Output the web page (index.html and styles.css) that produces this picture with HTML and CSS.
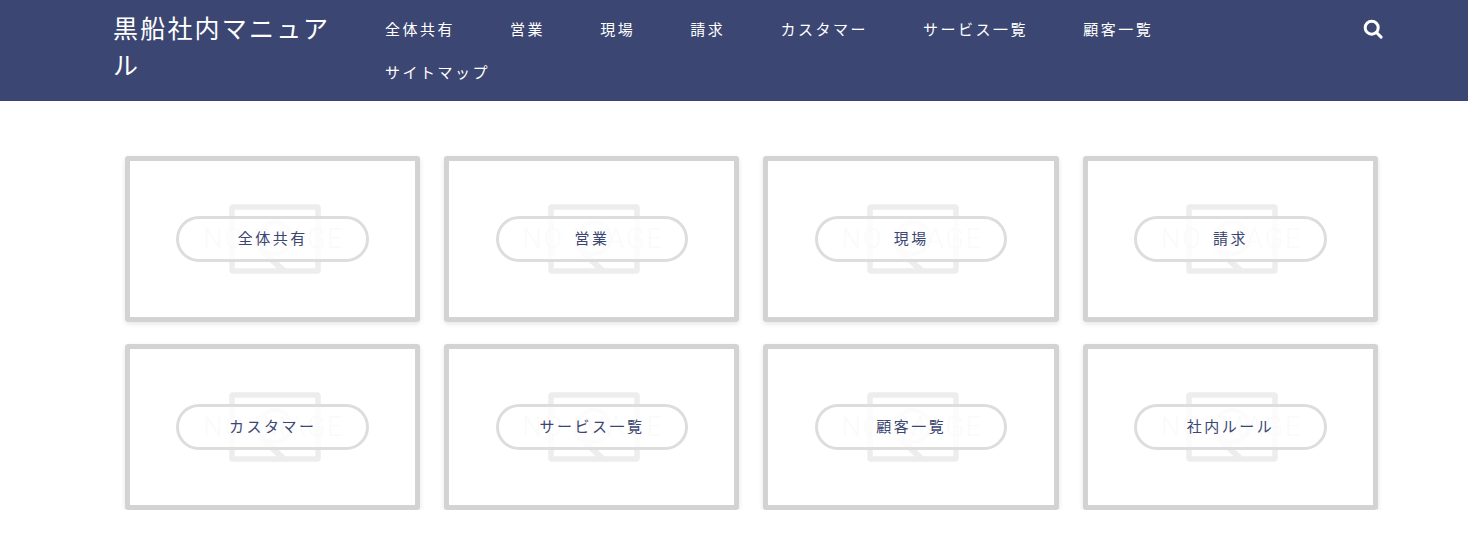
FILE: index.html
```html
<!DOCTYPE html>
<html lang="ja">
<head>
    <meta charset="UTF-8">
    <meta name="viewport" content="width=device-width, initial-scale=1.0">
    <title>黒船社内マニュアル</title>
    <link rel="stylesheet" href="styles.css">
</head>
<body>
    <svg class="sprite" width="0" height="0">
        <symbol id="noimage" viewBox="0 0 92 70">
            <rect x="3" y="3" width="86" height="64" rx="1" fill="none" stroke="currentColor" stroke-width="5.5"/>
            <path d="M30 44L55 67" fill="none" stroke="currentColor" stroke-width="6"/>
            <circle cx="46" cy="34" r="16" fill="none" stroke="currentColor" stroke-width="4"/>
        </symbol>
    </svg>

    <header class="site-header">
        <div class="header-inner">
            <a class="site-title" href="#">黒船社内マニュアル</a>
            <nav class="global-nav">
                <a href="#">全体共有</a>
                <a href="#">営業</a>
                <a href="#">現場</a>
                <a href="#">請求</a>
                <a href="#">カスタマー</a>
                <a href="#">サービス一覧</a>
                <a href="#">顧客一覧</a>
                <a href="#">サイトマップ</a>
            </nav>
            <a class="search-btn" href="#" aria-label="検索">
                <svg viewBox="0 0 20 20" width="20" height="20">
                    <circle cx="8.7" cy="8.7" r="6.5" fill="none" stroke="currentColor" stroke-width="3"/>
                    <path d="M13.5 13.5l4.6 4.6" stroke="currentColor" stroke-width="3" stroke-linecap="round"/>
                </svg>
            </a>
        </div>
    </header>

    <main class="category-grid">
        <a class="card" href="#">
            <span class="thumb"><svg class="thumb-icon"><use href="#noimage"/></svg><span class="thumb-text">NO IMAGE</span></span>
            <span class="card-label">全体共有</span>
        </a>
        <a class="card" href="#">
            <span class="thumb"><svg class="thumb-icon"><use href="#noimage"/></svg><span class="thumb-text">NO IMAGE</span></span>
            <span class="card-label">営業</span>
        </a>
        <a class="card" href="#">
            <span class="thumb"><svg class="thumb-icon"><use href="#noimage"/></svg><span class="thumb-text">NO IMAGE</span></span>
            <span class="card-label">現場</span>
        </a>
        <a class="card" href="#">
            <span class="thumb"><svg class="thumb-icon"><use href="#noimage"/></svg><span class="thumb-text">NO IMAGE</span></span>
            <span class="card-label">請求</span>
        </a>
        <a class="card" href="#">
            <span class="thumb"><svg class="thumb-icon"><use href="#noimage"/></svg><span class="thumb-text">NO IMAGE</span></span>
            <span class="card-label">カスタマー</span>
        </a>
        <a class="card" href="#">
            <span class="thumb"><svg class="thumb-icon"><use href="#noimage"/></svg><span class="thumb-text">NO IMAGE</span></span>
            <span class="card-label">サービス一覧</span>
        </a>
        <a class="card" href="#">
            <span class="thumb"><svg class="thumb-icon"><use href="#noimage"/></svg><span class="thumb-text">NO IMAGE</span></span>
            <span class="card-label">顧客一覧</span>
        </a>
        <a class="card" href="#">
            <span class="thumb"><svg class="thumb-icon"><use href="#noimage"/></svg><span class="thumb-text">NO IMAGE</span></span>
            <span class="card-label">社内ルール</span>
        </a>
    </main>
</body>
</html>
```

FILE: styles.css
```css
* {
    margin: 0;
    padding: 0;
    box-sizing: border-box;
}

body {
    background: #fff;
    color: #3c4672;
    font-family: "Noto Sans CJK JP", "Noto Sans", sans-serif;
}

a {
    color: inherit;
    text-decoration: none;
}

.sprite {
    display: none;
}

.site-header {
    background: #3c4672;
    color: #fff;
    height: 101px;
}

.header-inner {
    display: flex;
    width: 1270px;
    margin-left: 113px;
}

.site-title {
    flex: 0 0 244px;
    padding: 9px 20px 0 0;
    font-size: 25px;
    line-height: 37px;
    letter-spacing: 2.2px;
}

.global-nav {
    flex: 1;
    display: flex;
    flex-wrap: wrap;
    align-content: flex-start;
    padding: 7px 150px 0 28px;
    column-gap: 55.1px;
    font-size: 15px;
    line-height: 43px;
    letter-spacing: 2.5px;
}

.search-btn {
    flex: 0 0 auto;
    padding-top: 19px;
}

.category-grid {
    display: grid;
    grid-template-columns: repeat(4, 1fr);
    gap: 22px 24px;
    width: 1253px;
    margin: 55px 0 0 124.9px;
}

.card {
    position: relative;
    display: block;
    height: 166px;
    border: 5px solid #d3d3d3;
    border-radius: 3px;
    box-shadow: 0 2px 5px rgba(0, 0, 0, 0.1);
}

.thumb {
    display: flex;
    align-items: center;
    justify-content: center;
    height: 100%;
    padding-left: 4px;
    color: #ededed;
}

.thumb-icon {
    width: 92px;
    height: 70px;
}

.thumb-text {
    position: absolute;
    top: 50%;
    left: 3px;
    right: 0;
    transform: translateY(-50%);
    text-align: center;
    font-family: "Roboto", sans-serif;
    font-size: 27px;
    font-weight: 300;
    letter-spacing: 2px;
    color: #e6e6e6;
}

.card-label {
    position: absolute;
    top: 50%;
    left: 46.5px;
    width: 192.5px;
    height: 46px;
    margin-top: -23px;
    border: 3px solid #ddd;
    border-radius: 23px;
    background: rgba(255, 255, 255, 0.8);
    font-size: 15px;
    line-height: 38px;
    letter-spacing: 2.5px;
    text-align: center;
}
```
